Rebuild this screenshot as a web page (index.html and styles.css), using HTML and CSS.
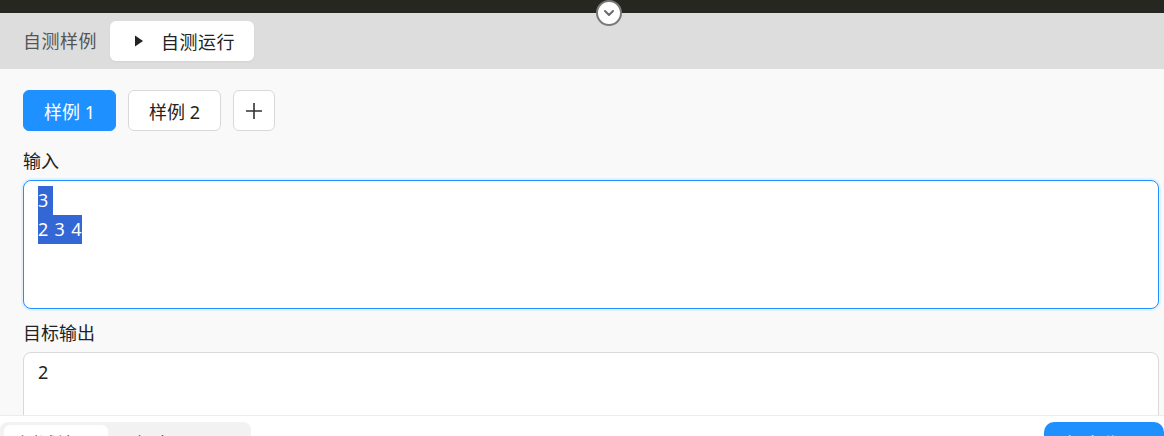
FILE: index.html
```html
<!DOCTYPE html>
<html lang="zh-CN">
<head>
  <meta charset="UTF-8">
  <title>自测样例</title>
  <link rel="stylesheet" href="styles.css">
</head>
<body>
  <div class="topbar">
    <span class="fold-toggle">
      <svg width="14" height="14" viewBox="0 0 14 14"><path d="M3 5 L7 9 L11 5" fill="none" stroke="#6b6b6b" stroke-width="2" stroke-linecap="round" stroke-linejoin="round"/></svg>
    </span>
  </div>

  <div class="header">
    <span class="header-title">自测样例</span>
    <button class="run-btn">
      <svg width="10" height="12" viewBox="0 0 10 12"><path d="M1 0.5 L9 6 L1 11.5 Z" fill="#222"/></svg>
      <span>自测运行</span>
    </button>
  </div>

  <div class="main">
    <div class="tabs">
      <button class="tab active">样例 1</button>
      <button class="tab">样例 2</button>
      <button class="tab add">
        <svg width="18" height="18" viewBox="0 0 18 18"><path d="M9 1 V17 M1 9 H17" stroke="#333" stroke-width="1.6"/></svg>
      </button>
    </div>

    <div class="label">输入</div>
    <div class="box focused">
      <div class="line"><span class="sel nl">3</span></div>
      <div class="line"><span class="sel">2 3 4</span></div>
    </div>

    <div class="label">目标输出</div>
    <div class="box tall">
      <div class="line">2</div>
    </div>
  </div>

  <div class="footer">
    <div class="segment">
      <span class="seg-item active">测试结果</span>
      <span class="seg-item">提交记录</span>
    </div>
    <button class="submit-btn">提交代码</button>
  </div>
</body>
</html>
```

FILE: styles.css
```css
html, body {
  margin: 0;
  padding: 0;
  height: 100%;
}
body {
  font-family: "Noto Sans", "Noto Sans CJK SC", sans-serif;
  font-size: 18px;
  color: #222;
  background: #f9f9f9;
  overflow: hidden;
}
button {
  font-family: inherit;
  font-size: 18px;
  cursor: pointer;
}
.topbar {
  position: relative;
  height: 13px;
  background: #272721;
}
.fold-toggle {
  position: absolute;
  left: 596px;
  top: 0;
  width: 22px;
  height: 22px;
  border: 2px solid #7a7a7a;
  border-radius: 50%;
  background: #fff;
  display: flex;
  align-items: center;
  justify-content: center;
  z-index: 2;
}
.header {
  height: 56px;
  background: #dddddd;
  display: flex;
  align-items: center;
  padding-left: 23px;
  gap: 13px;
}
.header-title {
  color: #555;
  line-height: 27px;
  letter-spacing: 0.5px;
}
.run-btn {
  height: 40px;
  width: 144px;
  border: none;
  border-radius: 6px;
  background: #fff;
  color: #222;
  display: flex;
  align-items: center;
  padding: 0 0 0 24px;
  gap: 17px;
  letter-spacing: 0.5px;
  box-shadow: 0 1px 2px rgba(0, 0, 0, 0.05);
}
.main {
  height: 346px;
  overflow: hidden;
  padding: 21px 5px 0 23px;
  box-sizing: border-box;
}
.tabs {
  display: flex;
  gap: 12px;
}
.tab {
  height: 41px;
  width: 93px;
  border: 1px solid #d9d9d9;
  border-radius: 6px;
  background: #fff;
  color: #222;
  padding: 0;
}
.tab.active {
  background: #1e90ff;
  border-color: #1e90ff;
  color: #fff;
}
.tab.add {
  width: 42px;
  display: flex;
  align-items: center;
  justify-content: center;
}
.label {
  line-height: 27px;
  margin: 17px 0 5px;
}
.box + .label {
  margin-top: 11px;
}
.box {
  height: 129px;
  box-sizing: border-box;
  background: #fff;
  border: 1px solid #d9d9d9;
  border-radius: 8px;
  padding: 5px 14px;
  line-height: 29px;
  letter-spacing: 0.8px;
}
.box.focused {
  border-color: #1e90ff;
  box-shadow: 0 0 0 2px #e3f1ff;
}
.box.tall {
  height: 160px;
}
.sel {
  background: #3367d6;
  color: #fff;
  display: inline-block;
}
.sel.nl {
  padding-right: 4px;
}
.footer {
  border-top: 1px solid #ececec;
  background: #fff;
  height: 80px;
  display: flex;
  justify-content: space-between;
  align-items: flex-start;
  padding-top: 6px;
}
.segment {
  background: #f2f2f2;
  border-radius: 8px;
  padding: 3px 4px;
  width: 243px;
  display: flex;
}
.seg-item {
  width: 104px;
  text-align: center;
  line-height: 27px;
  padding: 6px 0 8px;
  border-radius: 6px;
  color: #333;
}
.seg-item.active {
  background: #fff;
}
.seg-item + .seg-item {
  margin-left: 12px;
}
.submit-btn {
  width: 120px;
  height: 44px;
  border: none;
  border-radius: 10px;
  background: #1e90ff;
  color: #fff;
  padding: 9px 0 0 22px;
  line-height: 27px;
  text-align: left;
  align-self: flex-start;
  display: flex;
  align-items: flex-start;
}
```
